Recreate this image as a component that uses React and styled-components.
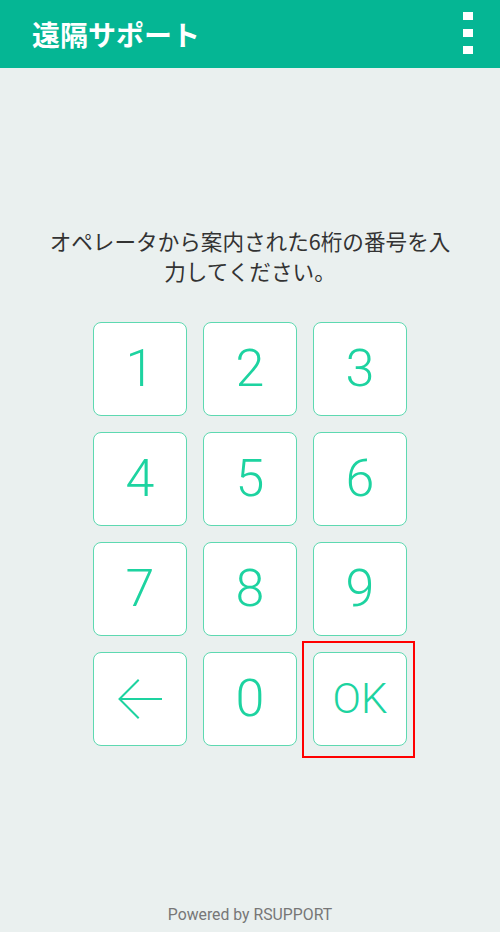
import React from "react";
import styled, { createGlobalStyle } from "styled-components";

const Global = createGlobalStyle`
  html, body { margin: 0; padding: 0; }
  body { background: #eaf0ef; font-family: "Noto Sans CJK JP", "Noto Sans", sans-serif; }
`;

const Page = styled.div`
  width: 500px;
  height: 932px;
  display: flex;
  flex-direction: column;
  background: #eaf0ef;
`;

const Header = styled.header`
  height: 68px;
  flex: none;
  background: #05b694;
  display: flex;
  align-items: center;
  justify-content: space-between;
  padding: 0 27px 0 32px;
  box-sizing: border-box;
`;

const Title = styled.h1`
  margin: 0;
  color: #fff;
  font-size: 28px;
  font-weight: 700;
  font-family: "Noto Sans CJK JP", sans-serif;
  line-height: 1;
  margin-top: -1px;
`;

const Kebab = styled.div`
  display: flex;
  flex-direction: column;
  gap: 9px;
  margin-top: -2px;
`;

const Dot = styled.span`
  display: block;
  width: 10px;
  height: 8px;
  background: #fff;
`;

const Main = styled.main`
  flex: 1;
  display: flex;
  flex-direction: column;
  align-items: center;
  padding-top: 158px;
`;

const Message = styled.p`
  margin: 0;
  width: 420px;
  text-align: center;
  color: #333;
  font-size: 21.6px;
  line-height: 30px;
  font-family: "Noto Sans CJK JP", sans-serif;
`;

const Pad = styled.div`
  margin-top: 36px;
  display: grid;
  grid-template-columns: repeat(3, 94px);
  grid-auto-rows: 94px;
  column-gap: 16px;
  row-gap: 16px;
`;

const Key = styled.button`
  position: relative;
  box-sizing: border-box;
  width: 94px;
  height: 94px;
  padding: 0;
  background: #fff;
  border: 1px solid #5ed9b1;
  border-radius: 8px;
  display: flex;
  align-items: center;
  justify-content: center;
  color: #1dd3a0;
  font-family: Roboto, "Liberation Sans", sans-serif;
  font-weight: 300;
  font-size: ${(p) => (p.$small ? "42px" : "52px")};
  line-height: 1;
  cursor: pointer;

  ${(p) =>
    p.$marked &&
    `
    &::after {
      content: "";
      position: absolute;
      left: -12px;
      top: -12px;
      right: -9px;
      bottom: -13px;
      border: 2px solid #f00;
      pointer-events: none;
    }
  `}
`;

const Footer = styled.footer`
  flex: none;
  text-align: center;
  color: #777;
  font-family: Roboto, "Liberation Sans", sans-serif;
  font-size: 15.8px;
  padding-bottom: 8px;
`;

const BackArrow = () => (
  <svg width="46" height="40" viewBox="0 0 46 40" fill="none">
    <path
      d="M44 20H3M21 1.5L2.5 20L21 38.5"
      stroke="#1dd3a0"
      strokeWidth="2"
      strokeLinecap="square"
    />
  </svg>
);

const digits = ["1", "2", "3", "4", "5", "6", "7", "8", "9"];

export default function App() {
  return (
    <Page>
      <Global />
      <Header>
        <Title>遠隔サポート</Title>
        <Kebab>
          <Dot />
          <Dot />
          <Dot />
        </Kebab>
      </Header>
      <Main>
        <Message>オペレータから案内された6桁の番号を入力してください。</Message>
        <Pad>
          {digits.map((d) => (
            <Key key={d}>{d}</Key>
          ))}
          <Key aria-label="back">
            <BackArrow />
          </Key>
          <Key>0</Key>
          <Key $small $marked>
            OK
          </Key>
        </Pad>
      </Main>
      <Footer>Powered by RSUPPORT</Footer>
    </Page>
  );
}
